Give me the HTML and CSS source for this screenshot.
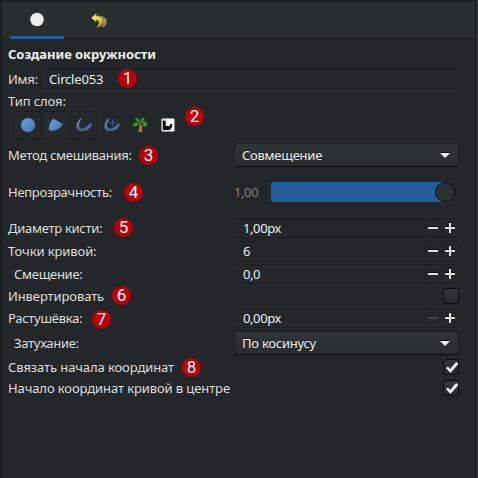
FILE: index.html
```html
<!DOCTYPE html>
<html lang="ru">
<head>
<meta charset="utf-8">
<title>Создание окружности</title>
<link rel="stylesheet" href="styles.css">
</head>
<body>
<svg class="defs" width="0" height="0">
  <defs>
    <linearGradient id="blue" x1="0" y1="0" x2="1" y2="1"><stop offset="0" stop-color="#6f9fd4"/><stop offset="1" stop-color="#4576b6"/></linearGradient>
    <linearGradient id="stroke" x1="0" y1="0" x2="1" y2="1"><stop offset="0" stop-color="#8493b5"/><stop offset=".35" stop-color="#66769b"/><stop offset=".65" stop-color="#445a88"/><stop offset="1" stop-color="#8298cb"/></linearGradient>
    <linearGradient id="gold" x1="0" y1="0" x2="1" y2="1"><stop offset="0" stop-color="#fff39a"/><stop offset=".55" stop-color="#e5cc46"/><stop offset="1" stop-color="#a78b20"/></linearGradient>
  </defs>
</svg>
<main class="panel">
  <nav class="tabs">
    <div class="tab active"><svg width="16" height="16" viewBox="0 0 16 16"><circle cx="8" cy="8.5" r="6.8" fill="#eeeeec"/></svg></div>
    <div class="tab"><svg width="18" height="18" viewBox="0 0 18 18">
      <path d="M6 6.5L9 3.5V5C14.5 4.6 17.4 7.8 16.8 11.5C16.4 14.4 14 16.4 10.5 16.3C14 14.2 14 9.8 10 9V11Z" fill="#968b60"/>
      <path d="M1.3 6.8L6.2 2.4V5C11 4.8 13.6 7.5 13 11C12.5 14.2 10 16.2 6.3 16.4C9.9 13.5 9.8 9.5 6.2 9V11.4Z" fill="url(#gold)" stroke="#73651d" stroke-width=".5"/>
    </svg></div>
  </nav>
  <section class="form">
    <h1 class="title">Создание окружности</h1>
    <div class="row name"><label class="field">Имя:</label><div class="entry">Circle053</div><b class="badge b1">1</b></div>
    <div class="row type"><label>Тип слоя:</label></div>
    <div class="row layers">
      <i class="tool on"><svg width="16" height="16" viewBox="0 0 16 16"><circle cx="8" cy="8" r="7" fill="url(#blue)" stroke="#3a69a8" stroke-width=".6"/></svg></i>
      <i class="tool on"><svg width="16" height="16" viewBox="0 0 16 16"><path d="M5.2 1.7L14.8 7.1C12.7 10.6 8.7 13.8 3.5 13.8C1.1 13.8.6 11.8 1.1 9.7C1.7 7 3 3.5 5.2 1.7Z" fill="url(#blue)" stroke="#3a69a8" stroke-width=".6"/></svg></i>
      <i class="tool on"><svg width="16" height="16" viewBox="0 0 16 16"><path d="M4.8 1.2C1 4-.6 9 1.2 12C4 16.6 14 13.6 15.8 7.5L14.7 5.4C13.1 6.2 12.6 7.8 10.5 9.2C7.7 11.8 4.4 12.3 3.4 9.7C2.6 7.3 3.5 4.1 5.6 1.8Z" fill="url(#stroke)"/></svg></i>
      <i class="tool"><svg width="16" height="16" viewBox="0 0 16 16"><path d="M4.8 1.2C1 4-.6 9 1.2 12C4 16.6 14 13.6 15.8 7.5L14.7 5.4C13.1 6.2 12.6 7.8 10.5 9.2C7.7 11.8 4.4 12.3 3.4 9.7C2.6 7.3 3.5 4.1 5.6 1.8Z" fill="url(#stroke)"/><path d="M8.5 2.3V9M5.2 5.6H11.8" stroke="#315d9f" stroke-width="1.2"/></svg></i>
      <i class="tool"><svg width="16" height="16" viewBox="0 0 16 16"><path d="M7.3 5H8.8L9.6 9L12.3 6.5L12.9 7.5L10 10.7L10.4 15H5.5C7.2 13 7.5 9 7.3 5Z" fill="#a86022"/><path d="M8.5 9V15" stroke="#d8953e" stroke-width=".8"/><path d="M7.8 6C4.8 4.6 3.2 3.2 3 1C5.8.5 7.7 2.3 8 5C8.1 2.1 9.7.5 12.2.8C13.2 3.5 11 5.1 8.5 6ZM7.2 5.5C6.8 8.8 4.3 9.5 1.3 9.3C.2 6.9 2.6 4.6 7.2 5.5ZM9.3 5.8C11.6 3.6 14.7 4.3 15.3 7.3C15.2 9.2 13.8 10 12.3 10C12 8 11.3 6.6 9.3 5.8Z" fill="#40902b" stroke="#246018" stroke-width=".6"/></svg></i>
      <i class="tool"><svg width="16" height="16" viewBox="0 0 16 16"><defs><linearGradient id="bw"><stop stop-color="#777"/><stop offset=".5" stop-color="#fff"/></linearGradient><filter id="soft"><feGaussianBlur stdDeviation=".7"/></filter></defs><path d="M2 2H14V14H2Z" fill="url(#bw)" stroke="#fff"/><path d="M3 4H5.5V9H10V7H12V10L9.5 13H3Z" fill="#050505" filter="url(#soft)"/></svg></i>
      <b class="badge b2">2</b>
    </div>
    <div class="row blend"><label class="field">Метод смешивания:</label><div class="select"><span>Совмещение</span></div><b class="badge b3">3</b></div>
    <div class="row opacity"><label class="field">Непрозрачность:</label><div class="scale"><span class="value">1,00</span><div class="track"><i class="knob"></i></div></div><b class="badge b4">4</b></div>
    <div class="row spinrow brush"><label class="field">Диаметр кисти:</label><div class="spin"><span>1,00px</span><i class="minus"></i><i class="plus"></i></div><b class="badge b5">5</b></div>
    <div class="row spinrow"><label>Точки кривой:</label><div class="spin"><span>6</span><i class="minus"></i><i class="plus"></i></div></div>
    <div class="row spinrow sub"><label class="field">Смещение:</label><div class="spin"><span>0,0</span><i class="minus"></i><i class="plus"></i></div></div>
    <div class="row check invert"><label>Инвертировать</label><i class="box"></i><b class="badge b6">6</b></div>
    <div class="row spinrow feather"><label class="field">Растушёвка:</label><div class="spin"><span>0,00px</span><i class="minus off"></i><i class="plus"></i></div><b class="badge b7">7</b></div>
    <div class="row falloff sub"><label class="field">Затухание:</label><div class="select"><span>По косинусу</span></div></div>
    <div class="row check link"><label>Связать начала координат</label><i class="box"><svg width="16" height="16" viewBox="0 0 16 16"><path d="M3 8L5 6.5L7.2 9L12.6 2.5H15V4.5L7.8 12.5H7Z" fill="#eeeeec"/></svg></i><b class="badge b8">8</b></div>
    <div class="row check origin"><label>Начало координат кривой в центре</label><i class="box"><svg width="16" height="16" viewBox="0 0 16 16"><path d="M3 8L5 6.5L7.2 9L12.6 2.5H15V4.5L7.8 12.5H7Z" fill="#eeeeec"/></svg></i></div>
  </section>
</main>
</body>
</html>
```
FILE: styles.css
```css
* { box-sizing: border-box; }
body { margin: 0; width: 478px; height: 478px; overflow: hidden; background: #1b1e1f; color: #dedfda; font: 13px/20px "Noto Sans", sans-serif; letter-spacing: -0.1px; }
.defs { position: absolute; }
svg { display: block; }
.panel { width: 478px; height: 478px; padding: 2px 0 0 2px; background: linear-gradient(90deg, transparent 475px, #181b1c 475px, #181b1c 476px, #2b2e2f 476px); }
.tabs { display: flex; width: 473px; height: 37px; padding-left: 8px; background: #282d2e; border-bottom: 1px solid #1b1f20; }
.tab { display: flex; width: 54px; height: 37px; margin-right: 8px; align-items: center; justify-content: center; padding-bottom: 2px; }
.tab.active { border-bottom: 3px solid #215d9c; padding-bottom: 0; }
.form { width: 473px; height: 439px; padding: 5px 16px 0 6px; background: #232729; }
.title { height: 21px; margin: 0 0 4px; font-size: 13px; line-height: 21px; font-weight: 700; letter-spacing: -0.04px; color: #eeeeec; }
.row { position: relative; display: flex; align-items: center; justify-content: space-between; }
.row label { white-space: nowrap; }
.row .field { letter-spacing: -0.28px; }
.row.sub label { padding-left: 6px; }
.name { height: 20px; }
.entry { width: 419px; height: 20px; padding-left: 8px; line-height: 19px; letter-spacing: -0.2px; border: 1px solid #1c2021; border-radius: 3px; color: #eeeeec; }
.type { height: 20px; margin-top: 2px; }
.layers { height: 28px; margin: 0 0 4px 6px; justify-content: flex-start; }
.tool { display: flex; width: 28px; height: 28px; align-items: center; justify-content: center; }
.tool.on { width: 27px; margin-right: 1px; border: 1px solid #1b1f20; border-radius: 3px; background: #25292b; }
.select { width: 225px; height: 24px; padding: 0 9px 0 7px; display: flex; align-items: center; justify-content: space-between; line-height: 22px; letter-spacing: -0.25px; color: #eeeeec; border: 1px solid #1a1d1e; border-bottom-color: #0c0e0f; border-radius: 3px; background: linear-gradient(#303536, #272b2c); text-shadow: 0 -1px #1b1f20; }
.select::after { content: ""; border: 5px solid transparent; border-top-color: #eeeeec; border-bottom: 0; margin-right: -1px; filter: drop-shadow(0 -1px #0b0d0d); }
.blend { height: 24px; }
.opacity { height: 20px; margin-top: 15px; }
.scale { display: flex; width: 225px; height: 20px; }
.value { width: 37px; letter-spacing: -0.4px; color: #7e8180; }
.track { width: 184px; height: 20px; display: flex; justify-content: flex-end; border-radius: 2px; background: linear-gradient(90deg, #215d9c 174px, transparent 174px); }
.knob { width: 20px; height: 20px; border: 1px solid #080a0a; border-radius: 50%; background: linear-gradient(#282d2e, #303536); }
.spinrow { height: 20px; margin-top: 3px; }
.brush { margin-top: 16px; }
.spin { display: flex; width: 225px; height: 20px; letter-spacing: -0.4px; border: 1px solid #1c2021; border-radius: 3px; color: #eeeeec; }
.spin span { width: 189px; padding-left: 8px; line-height: 18px; }
.spin i { position: relative; width: 17px; height: 18px; border-left: 1px solid #202425; background: linear-gradient(#dedfda, #dedfda) 3px 8px / 10px 2px no-repeat; filter: drop-shadow(0 -1px #080a0a); }
.spin .plus { background: linear-gradient(#dedfda, #dedfda) 3px 8px / 10px 2px no-repeat, linear-gradient(#dedfda, #dedfda) 7px 4px / 2px 10px no-repeat; }
.spin .off { background-image: linear-gradient(#454849, #454849); filter: none; }
.check { height: 16px; }
.box { width: 16px; height: 16px; border: 1px solid #0a0c0d; border-radius: 3px; background: linear-gradient(#303536, #252a2b); }
.box svg { margin: 0 0 0 -1px; }
.invert { margin-top: 4px; }
.feather { margin-top: 4px; }
.falloff { height: 24px; margin-top: 3px; }
.link { margin-top: 4px; }
.origin { margin-top: 5px; }
.badge { position: absolute; width: 19px; height: 19px; border-radius: 50%; background: #b90008; color: #fff; font: 400 17px/19px Roboto, sans-serif; letter-spacing: 0; text-align: center; }
.b1 { left: 110px; top: 0; }
.b2 { left: 171px; top: -4px; }
.b3 { left: 131px; top: 3px; }
.b4 { left: 116px; top: 1px; }
.b5 { left: 106px; top: 0; }
.b6 { left: 104px; top: -2px; }
.b7 { left: 84px; top: 2px; }
.b8 { left: 174px; top: -1px; }
```
